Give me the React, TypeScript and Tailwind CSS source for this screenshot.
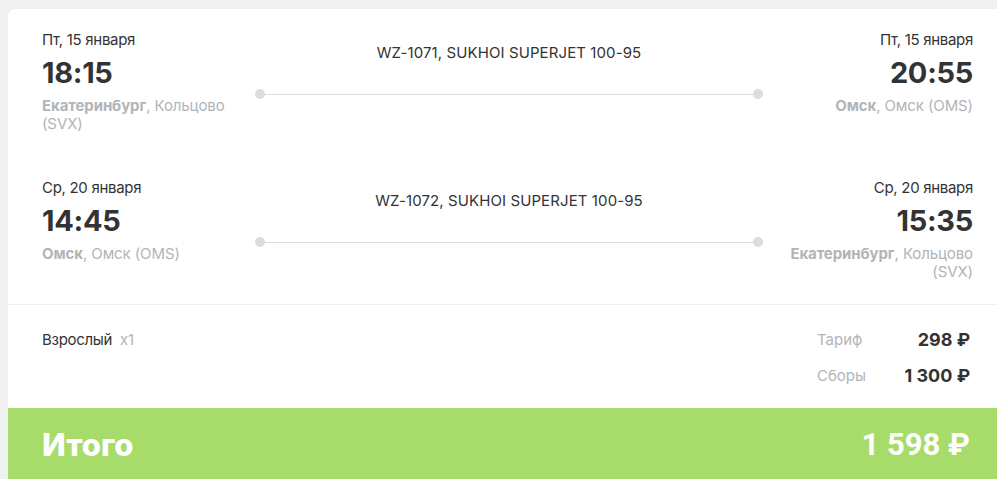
const font = { fontFamily: 'Inter, "Noto Sans", sans-serif' }

type Leg = {
  depDate: string
  depTime: string
  depCity: string
  depPlace: string
  flight: string
  arrDate: string
  arrTime: string
  arrCity: string
  arrPlace: string
}

const legs: Leg[] = [
  {
    depDate: 'Пт, 15 января',
    depTime: '18:15',
    depCity: 'Екатеринбург',
    depPlace: 'Кольцово (SVX)',
    flight: 'WZ-1071, SUKHOI SUPERJET 100-95',
    arrDate: 'Пт, 15 января',
    arrTime: '20:55',
    arrCity: 'Омск',
    arrPlace: 'Омск (OMS)',
  },
  {
    depDate: 'Ср, 20 января',
    depTime: '14:45',
    depCity: 'Омск',
    depPlace: 'Омск (OMS)',
    flight: 'WZ-1072, SUKHOI SUPERJET 100-95',
    arrDate: 'Ср, 20 января',
    arrTime: '15:35',
    arrCity: 'Екатеринбург',
    arrPlace: 'Кольцово (SVX)',
  },
]

const LegRow = ({ leg }: { leg: Leg }) => {
  return (
    <div className="grid grid-cols-[213px_1fr_210px]">
      <div>
        <div className="text-[15px] leading-5 tracking-[-0.3px] text-[#333]">{leg.depDate}</div>
        <div className="mt-[5px] text-[29px] font-bold leading-9 tracking-[-0.3px] text-[#333]">{leg.depTime}</div>
        <div className="mt-[6px] max-w-[195px] text-[15px] leading-[18px] tracking-[-0.1px] text-[#b3b4b7]">
          <b className="font-bold">{leg.depCity}</b>, {leg.depPlace}
        </div>
      </div>
      <div className="flex flex-col items-center pt-[13px]">
        <div className="text-[15px] leading-5 tracking-[0.1px] text-[#333]">{leg.flight}</div>
        <div className="mt-[26px] flex w-[508px] items-center">
          <span className="h-[10px] w-[10px] shrink-0 rounded-full bg-[#dcdde0]" />
          <span className="h-px flex-1 bg-[#dcdde0]" />
          <span className="h-[10px] w-[10px] shrink-0 rounded-full bg-[#dcdde0]" />
        </div>
      </div>
      <div className="flex flex-col items-end text-right">
        <div className="text-[15px] leading-5 tracking-[-0.3px] text-[#333]">{leg.arrDate}</div>
        <div className="mt-[5px] text-[29px] font-bold leading-9 tracking-[-0.3px] text-[#333]">{leg.arrTime}</div>
        <div className="mt-[6px] max-w-[195px] text-[15px] leading-[18px] tracking-[-0.1px] text-[#b3b4b7]">
          <b className="font-bold">{leg.arrCity}</b>, {leg.arrPlace}
        </div>
      </div>
    </div>
  )
}

const App = () => {
  return (
    <div className="h-[479px] w-[997px] overflow-hidden bg-[#eff0f2] pl-2 pt-[9px]" style={font}>
      <div className="w-[996px] overflow-hidden rounded-lg bg-white">
        <div className="flex flex-col gap-[45px] px-[34px] pb-[23px] pt-[21px]">
          {legs.map((leg) => (
            <LegRow key={leg.flight} leg={leg} />
          ))}
        </div>
        <div className="h-px bg-[#f0f0f2]" />
        <div className="flex justify-between px-[34px] pb-[20px] pt-[25px]">
          <div className="text-[15px] leading-5 tracking-[-0.3px] text-[#333]">
            Взрослый <span className="ml-1 text-[#b3b4b7]">x1</span>
          </div>
          <div className="-mt-[2px] flex flex-col gap-3">
            <div className="flex items-center">
              <span className="w-[60px] text-[15px] text-[#b3b4b7]">Тариф</span>
              <span className="w-[93px] text-right text-[18px] font-bold leading-6 text-[#333]">298 ₽</span>
            </div>
            <div className="flex items-center">
              <span className="w-[60px] text-[15px] text-[#b3b4b7]">Сборы</span>
              <span className="w-[93px] text-right text-[18px] font-bold leading-6 text-[#333]">1 300 ₽</span>
            </div>
          </div>
        </div>
        <div className="flex h-[78px] items-start justify-between bg-[#a8dc6a] px-[34px] pt-[19px] text-white">
          <span className="text-[31px] font-extrabold leading-9">Итого</span>
          <span className="text-[31px] font-bold leading-9" style={{ fontFamily: 'Roboto, sans-serif' }}>
            1 598 ₽
          </span>
        </div>
      </div>
    </div>
  )
}

export default App
